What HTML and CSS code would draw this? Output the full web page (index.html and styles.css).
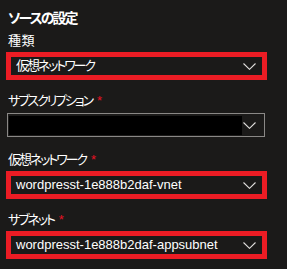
FILE: index.html
```html
<!DOCTYPE html>
<html>
  <head>
    <title>ソースの設定</title>
    <link rel="stylesheet" href="styles.css">
  </head>
  <body>
    <div class="panel">
      <div class="title">ソースの設定</div>

      <div class="group">
        <div class="label wide">種類</div>
        <div class="marked">
          <span class="value jp">仮想ネットワーク</span>
          <svg class="chev" width="13" height="7" viewBox="0 0 13 7"><polyline points="0.5,0.5 6.5,6.3 12.5,0.5" fill="none" stroke="#e1dfdd" stroke-width="1.1"/></svg>
        </div>
      </div>

      <div class="group">
        <div class="label">サブスクリプション<span class="req">*</span></div>
        <div class="select">
          <div class="redact"></div>
          <svg class="chev" width="13" height="7" viewBox="0 0 13 7"><polyline points="0.5,0.5 6.5,6.3 12.5,0.5" fill="none" stroke="#e1dfdd" stroke-width="1.1"/></svg>
        </div>
      </div>

      <div class="group">
        <div class="label">仮想ネットワーク<span class="req">*</span></div>
        <div class="marked">
          <span class="value">wordpresst-1e888b2daf-vnet</span>
          <svg class="chev" width="13" height="7" viewBox="0 0 13 7"><polyline points="0.5,0.5 6.5,6.3 12.5,0.5" fill="none" stroke="#e1dfdd" stroke-width="1.1"/></svg>
        </div>
      </div>

      <div class="group">
        <div class="label">サブネット<span class="req">*</span></div>
        <div class="marked">
          <span class="value">wordpresst-1e888b2daf-appsubnet</span>
          <svg class="chev" width="13" height="7" viewBox="0 0 13 7"><polyline points="0.5,0.5 6.5,6.3 12.5,0.5" fill="none" stroke="#e1dfdd" stroke-width="1.1"/></svg>
        </div>
      </div>
    </div>
  </body>
</html>
```

FILE: styles.css
```css
body{
  margin: 0;
  background-color: #1b1a19;
  color: #ffffff;
  font-family: "Liberation Sans", "Noto Sans CJK JP", sans-serif;
  font-size: 13px;
}

.panel{
  display: flex;
  flex-direction: column;
  gap: 12px;
  padding-top: 8px;
}

.title{
  margin-left: 8px;
  font-size: 14px;
  font-weight: bold;
  line-height: 20px;
  font-feature-settings: "palt";
  letter-spacing: -2px;
  margin-bottom: -8px;
}

.group{
  display: flex;
  flex-direction: column;
  gap: 2px;
}

.label{
  margin-left: 8px;
  line-height: 18px;
  font-size: 13px;
  font-feature-settings: "palt";
  letter-spacing: -2.1px;
}

.wide{
  letter-spacing: 0.5px;
}

.req{
  margin-left: 5px;
  color: #e81123;
  letter-spacing: 0;
}

.marked{
  display: flex;
  align-items: center;
  margin-left: 6px;
  width: 251px;
  height: 18px;
  border: 5px solid #ec1c24;
}

.value{
  flex: 1;
  padding-left: 5px;
  line-height: 18px;
}

.jp{
  font-feature-settings: "palt";
  letter-spacing: -2.1px;
}

.marked .chev{
  margin-right: 6px;
}

.select{
  display: flex;
  align-items: center;
  margin-left: 7px;
  margin-top: 1px;
  margin-bottom: 2px;
  width: 256px;
  height: 22px;
  border: 1px solid #8a8886;
}

.redact{
  width: 233px;
  height: 19px;
  margin-left: 1px;
  background-color: #000000;
}

.select .chev{
  margin-left: 1px;
}
```
